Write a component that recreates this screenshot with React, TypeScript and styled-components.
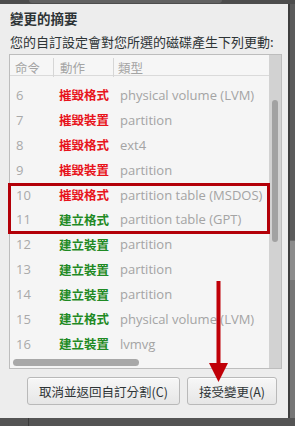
import React from "react";
import styled, { createGlobalStyle } from "styled-components";

const GlobalStyle = createGlobalStyle`
  html, body { margin: 0; padding: 0; background: #555555; }
  body { width: 295px; height: 426px; overflow: hidden; }
  * { box-sizing: border-box; }
`;

const FONT = `"Open Sans", "Noto Sans CJK TC", "Noto Sans", sans-serif`;

const Screen = styled.div`
  position: relative;
  width: 295px;
  height: 426px;
  display: flex;
  flex-direction: column;
  background: #565656;
  font-family: ${FONT};
`;

const TopStrip = styled.div`
  height: 4px;
  flex: none;
  background: #4d4d4d;
  display: flex;
  padding-left: 29px;
`;

const TopGhost = styled.div`
  width: 193px;
  height: 3px;
  background: #626262;
  border-radius: 0 0 3px 3px;
`;

const Middle = styled.div`
  display: flex;
  flex: none;
  height: 414px;
`;

const Dialog = styled.div`
  width: 288px;
  flex: none;
  background: #ededed;
  display: flex;
  flex-direction: column;
  padding: 5px 0 0 0;
`;

const RightStrip = styled.div`
  flex: 1;
  display: flex;
  flex-direction: column;
  border-left: 2px solid #3e3e3e;
  background: #5b5b5b;
  padding-top: 236px;
`;

const GhostPanel = styled.div`
  height: 40px;
  background: #8c8c8c;
  border-top: 1px solid #6c6c6c;
`;

const GhostLower = styled.div`
  flex: 1;
  background: #767676;
`;

const BottomStrip = styled.div`
  flex: 1;
  background: #545454;
  display: flex;
  padding-left: 28px;
`;

const GhostLine = styled.div`
  width: 1px;
  background: #3a3a3a;
`;

const Title = styled.div`
  font-family: "Noto Sans CJK TC", sans-serif;
  font-weight: 700;
  font-size: 13.5px;
  line-height: 18px;
  color: #2e3436;
  padding-left: 10px;
`;

const Subtitle = styled.div`
  font-family: "Noto Sans CJK TC", sans-serif;
  font-size: 13px;
  line-height: 18px;
  color: #2e3436;
  padding-left: 10px;
  margin-top: 6px;
`;

const ListBox = styled.div`
  margin: 3px 0 0 9px;
  width: 273px;
  height: 315px;
  flex: none;
  border: 1px solid #bdbdbd;
  background: #f5f5f5;
  display: flex;
  overflow: hidden;
`;

const ListMain = styled.div`
  flex: 1;
  display: flex;
  flex-direction: column;
  min-width: 0;
`;

const cols = `43px 60px 1fr`;

const Header = styled.div`
  display: grid;
  grid-template-columns: ${cols};
  height: 21px;
  flex: none;
  border-bottom: 1px solid #dadada;
  background: #f6f6f6;
`;

const HeaderCell = styled.div<{ $sep?: boolean; $pad: number }>`
  display: flex;
  align-items: center;
  margin: 3px 0 3px 0;
  padding-left: ${(p) => p.$pad}px;
  border-left: ${(p) => (p.$sep ? "1px solid #d6d6d6" : "none")};
  font-family: "Noto Sans CJK TC", sans-serif;
  font-size: 12.5px;
  color: #a4a4a4;
`;

const Body = styled.div`
  height: 281px;
  flex: none;
  overflow: hidden;
  padding-top: 6.5px;
`;

const Row = styled.div`
  display: grid;
  grid-template-columns: ${cols};
  height: 24.9px;
  align-items: center;
`;

const Num = styled.div`
  padding-left: 6px;
  font-size: 13px;
  color: #a9a9a9;
`;

const Action = styled.div<{ $kind: "destroy" | "create" }>`
  padding-left: 6px;
  font-family: "Noto Sans CJK TC", sans-serif;
  font-weight: 700;
  font-size: 12.5px;
  color: ${(p) => (p.$kind === "destroy" ? "#e8141c" : "#1f8a24")};
`;

const Type = styled.div`
  padding-left: 7px;
  font-size: 13px;
  color: #a4a4a4;
  white-space: nowrap;
`;

const HScroll = styled.div`
  flex: 1;
  display: flex;
  align-items: center;
  padding: 0 0 0 3px;
`;

const HThumb = styled.div`
  width: 126px;
  height: 7px;
  border-radius: 4px;
  background: #a8a8a8;
`;

const VTrough = styled.div`
  width: 12px;
  flex: none;
  background: #d2d2d2;
  display: flex;
  justify-content: center;
  padding-top: 45px;
`;

const VThumb = styled.div`
  width: 6px;
  height: 142px;
  border-radius: 3px;
  background: #a2a2a2;
`;

const Buttons = styled.div`
  display: flex;
  justify-content: flex-end;
  gap: 7px;
  padding-right: 11px;
  margin-top: 8px;
`;

const Button = styled.button`
  height: 28px;
  padding: 0 11px;
  border: 1px solid #b9b9b9;
  border-radius: 3px;
  background: linear-gradient(#f7f7f7, #e6e6e6);
  font-family: "Noto Sans CJK TC", sans-serif;
  font-size: 12.5px;
  color: #2e3436;
  box-shadow: 0 1px 0 rgba(255, 255, 255, 0.8) inset;
`;

const Highlight = styled.div`
  position: absolute;
  left: 8px;
  top: 183px;
  width: 262px;
  height: 51px;
  border: 3px solid #b30008;
  pointer-events: none;
`;

const ArrowSvg = styled.svg`
  position: absolute;
  left: 208px;
  top: 280px;
  pointer-events: none;
`;

type Act = { n: number; kind: "destroy" | "create"; action: string; type: string };

const actions: Act[] = [
  { n: 6, kind: "destroy", action: "摧毀格式", type: "physical volume (LVM)" },
  { n: 7, kind: "destroy", action: "摧毀裝置", type: "partition" },
  { n: 8, kind: "destroy", action: "摧毀格式", type: "ext4" },
  { n: 9, kind: "destroy", action: "摧毀裝置", type: "partition" },
  { n: 10, kind: "destroy", action: "摧毀格式", type: "partition table (MSDOS)" },
  { n: 11, kind: "create", action: "建立格式", type: "partition table (GPT)" },
  { n: 12, kind: "create", action: "建立裝置", type: "partition" },
  { n: 13, kind: "create", action: "建立裝置", type: "partition" },
  { n: 14, kind: "create", action: "建立裝置", type: "partition" },
  { n: 15, kind: "create", action: "建立格式", type: "physical volume (LVM)" },
  { n: 16, kind: "create", action: "建立裝置", type: "lvmvg" },
];

export default function App() {
  return (
    <>
      <GlobalStyle />
      <Screen>
        <TopStrip>
          <TopGhost />
        </TopStrip>
        <Middle>
          <Dialog>
            <Title>變更的摘要</Title>
            <Subtitle>您的自訂設定會對您所選的磁碟產生下列更動:</Subtitle>
            <ListBox>
              <ListMain>
                <Header>
                  <HeaderCell $pad={5}>命令</HeaderCell>
                  <HeaderCell $sep $pad={6}>動作</HeaderCell>
                  <HeaderCell $sep $pad={4}>類型</HeaderCell>
                </Header>
                <Body>
                  {actions.map((a) => (
                    <Row key={a.n}>
                      <Num>{a.n}</Num>
                      <Action $kind={a.kind}>{a.action}</Action>
                      <Type>{a.type}</Type>
                    </Row>
                  ))}
                </Body>
                <HScroll>
                  <HThumb />
                </HScroll>
              </ListMain>
              <VTrough>
                <VThumb />
              </VTrough>
            </ListBox>
            <Buttons>
              <Button>取消並返回自訂分割(C)</Button>
              <Button>接受變更(A)</Button>
            </Buttons>
          </Dialog>
          <RightStrip>
            <GhostPanel />
            <GhostLower />
          </RightStrip>
        </Middle>
        <BottomStrip>
          <GhostLine />
        </BottomStrip>
        <Highlight />
        <ArrowSvg width="22" height="104" viewBox="0 0 22 104">
          <rect x="8.5" y="1" width="4" height="85" fill="#c00008" />
          <polygon points="1,83 20,83 10.5,102" fill="#c00008" />
        </ArrowSvg>
      </Screen>
    </>
  );
}
